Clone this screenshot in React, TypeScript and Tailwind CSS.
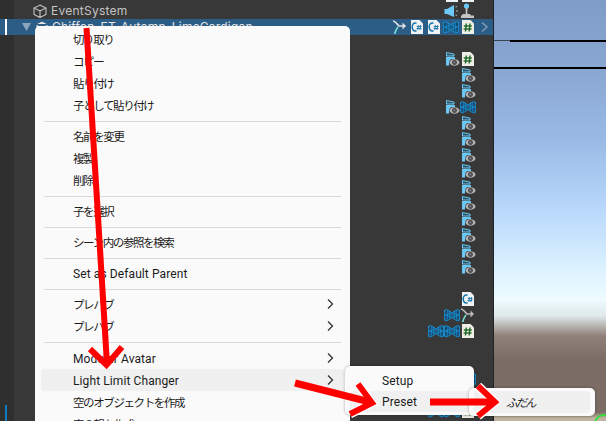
import React from 'react'

const menuFont = { fontFamily: 'Roboto, "Noto Sans CJK JP", sans-serif' }

function EyeFolder() {
  return (
    <svg width="16" height="16" viewBox="0 0 16 16">
      <path d="M2.500 1.500 L10 3.200 V5 H2.500 Z" fill="#33505f" stroke="#6cc9f7" strokeWidth="1" />
      <path d="M2 6 H11 V8 H8 C6 8.500 5 10 5 12 V14.500 H2 Z" fill="#6cc9f7" />
      <ellipse cx="10.500" cy="11.500" rx="5" ry="3.200" fill="#b0b0b0" />
      <circle cx="10.500" cy="11.500" r="2.400" fill="#444" />
      <circle cx="10.500" cy="11.500" r="1" fill="#8a8a8a" />
    </svg>
  )
}

function HashDoc() {
  return (
    <svg width="16" height="16" viewBox="0 0 16 16">
      <path d="M2 1 H10.500 L14 4.500 V15 H2 Z" fill="#eeeee6" />
      <path d="M6.300 4.500 L5.500 12.500 M10 4.500 L9.200 12.500 M3.800 7 H11.800 M3.600 10 H11.600" stroke="#256b2c" strokeWidth="1.500" fill="none" />
    </svg>
  )
}

function CsDoc() {
  return (
    <svg width="16" height="16" viewBox="0 0 16 16">
      <path d="M2 1 H10.500 L14 4.500 V15 H2 Z" fill="#eef2f4" />
      <path d="M7.500 4.200 C4 3.600 3.200 6 3.200 8 C3.200 10.500 4.600 12.600 7.500 11.800" stroke="#1474ac" strokeWidth="1.500" fill="none" />
      <path d="M9.400 6 L8.800 11 M11.600 6 L11 11 M7.800 7.500 H12.600 M7.600 9.500 H12.400" stroke="#1474ac" strokeWidth="0.900" fill="none" />
    </svg>
  )
}

function Bowtie() {
  return (
    <svg width="16" height="16" viewBox="0 0 16 16">
      <path d="M0.800 3 C3 2 6 4.500 8 6 C10 4.500 13 2 15.200 3 C16 6 16 10.500 15.200 13.500 C13 14.500 10 12 8 10.500 C6 12 3 14.500 0.800 13.500 C0 10.500 0 6 0.800 3 Z" fill="#174a6b" stroke="#1a96dc" strokeWidth="1" />
      <path d="M4 3 L3 13.500 M5.500 4 L6 12 M12 3 L13 13.500 M10.500 4 L10 12 M1 8 L7 6.500 M1 8 L7 10 M15 8 L9 6.500 M15 8 L9 10 M8 6 V10.500" stroke="#1a96dc" strokeWidth="0.700" fill="none" />
    </svg>
  )
}

function Fork({ light }: { light?: boolean }) {
  return (
    <svg width="16" height="16" viewBox="0 0 16 16">
      <path d="M1 2 C3 2 5 5 7 7 H12" stroke={light ? '#e0e0e0' : '#b9b9b9'} strokeWidth="1.600" fill="none" />
      <path d="M10.500 3.500 L14 7 L10.500 10.500 Z" fill={light ? '#e0e0e0' : '#b9b9b9'} />
      <path d="M6 8 C4 10 3.400 12 2.600 15" stroke="#7be3d6" strokeWidth="1.600" fill="none" />
    </svg>
  )
}

function Speaker() {
  return (
    <svg width="16" height="16" viewBox="0 0 16 16">
      <path d="M0.500 6 H3 L10 2 V14 L3 11 H0.500 Z" fill="#6cc9f7" />
      <path d="M11.500 4 L13 3.500 M12 8 H14 M11.500 12 L13 12.500" stroke="#9fb8c8" strokeWidth="1.200" />
    </svg>
  )
}

function Joystick() {
  return (
    <svg width="16" height="16" viewBox="0 0 16 16">
      <circle cx="6.500" cy="3" r="2.600" fill="#6cc9f7" />
      <rect x="5.700" y="5" width="1.700" height="6" fill="#c4c4c4" />
      <path d="M3 11 H10 L11 12.500 H14 V15 H1 V13 Z" fill="#c4c4c4" />
    </svg>
  )
}

// icons for each hierarchy row, left to right from the right edge
const rows: React.ReactNode[][] = [
  [<CsDoc key="a" />, <CsDoc key="b" />],
  [<Speaker key="a" />, <Joystick key="b" />],
  [<Fork key="a" light />, <CsDoc key="b" />, <CsDoc key="c" />, <Bowtie key="d" />, <HashDoc key="e" />],
  [],
  [<EyeFolder key="a" />, <HashDoc key="b" />],
  [<EyeFolder key="a" />],
  [<EyeFolder key="a" />],
  [<EyeFolder key="a" />, <Bowtie key="b" />],
  [<EyeFolder key="a" />],
  [<EyeFolder key="a" />],
  [<EyeFolder key="a" />],
  [<EyeFolder key="a" />],
  [<EyeFolder key="a" />],
  [<EyeFolder key="a" />],
  [<EyeFolder key="a" />],
  [<EyeFolder key="a" />],
  [<EyeFolder key="a" />],
  [<EyeFolder key="a" />],
  [],
  [<CsDoc key="a" />],
  [<Bowtie key="a" />, <Fork key="b" />],
  [<Bowtie key="a" />, <Bowtie key="b" />, <HashDoc key="c" />],
  [],
  [],
  [<Bowtie key="a" />],
  [],
  [<Bowtie key="a" />, <Bowtie key="b" />, <HashDoc key="c" />],
]

function Cube({ filled }: { filled?: boolean }) {
  return (
    <svg width="14" height="14" viewBox="0 0 14 14" className="shrink-0">
      <path d="M7 1 L13 4 V10.500 L7 13.500 L1 10.500 V4 Z M1 4 L7 7 L13 4 M7 7 V13.500" fill={filled ? '#e8e8e8' : 'none'} stroke={filled ? '#2c5d87' : '#c4c4c4'} strokeWidth="1.100" />
    </svg>
  )
}

function Separator({ tall }: { tall?: boolean }) {
  return <div className={tall ? 'mx-[9px] mt-[5px] mb-[4px] h-px bg-[#d9d9d9]' : 'mx-[9px] mt-[5px] mb-[3px] h-px bg-[#d9d9d9]'} />
}

function Chevron() {
  return (
    <svg width="8" height="12" viewBox="0 0 8 12" className="shrink-0">
      <path d="M2 1.500 L6.500 6 L2 10.500" fill="none" stroke="#333" strokeWidth="1.300" />
    </svg>
  )
}

function Item({ label, sub, active, ja }: { label: string; sub?: boolean; active?: boolean; ja?: boolean }) {
  return (
    <div className={active ? 'mx-[6px] flex h-[22px] items-center justify-between rounded-[4px] bg-[#f0f0f0] pl-[32px] pr-[10px]' : 'mx-[6px] flex h-[22px] items-center justify-between pl-[32px] pr-[10px]'}>
      <span className={ja ? 'whitespace-nowrap pt-[3px] text-[11.5px] tracking-[-1.4px] text-[#1b1b1b]' : 'whitespace-nowrap pt-px text-[12px] tracking-[0.1px] text-[#1b1b1b]'}>{label}</span>
      {sub && <Chevron />}
    </div>
  )
}

export default function App() {
  return (
    <div className="relative flex h-[421px] w-[606px] overflow-hidden bg-[#383838]">
      {/* hierarchy */}
      <div className="flex w-[493px] shrink-0">
        <div className="relative w-[14px] shrink-0 bg-[#2f2f2f]">
          <div className="absolute left-[5px] top-[405px] h-[16px] w-[2px] bg-[#1279bd]" />
        </div>
        <div className="-ml-[14px] -mt-[13px] flex w-full flex-col" style={{ fontFamily: 'Inter, sans-serif' }}>
          {rows.map((icons, i) => (
            <div key={i} className={i === 2 ? 'relative z-0 flex h-4 shrink-0 items-center bg-[#2c5d87] pr-[4px]' : 'relative z-0 flex h-4 shrink-0 items-center pr-[17px]'}>
              {i === 2 && <div className="absolute left-[5px] top-0 h-4 w-[2px] bg-white" />}
              {i === 1 && (
                <div className="ml-[33px] flex items-center gap-[4px] text-[12px] tracking-[0.25px] text-[#c4c4c4]">
                  <Cube />
                  <span>EventSystem</span>
                </div>
              )}
              {i === 2 && (
                <div className="ml-[22px] flex items-center gap-[3px] text-[12px] tracking-[0.2px] text-[#e4e4e4]">
                  <svg width="9" height="8" viewBox="0 0 9 8" className="mr-[1px]"><path d="M0 0 H9 L4.500 8 Z" fill="#8aa5bd" /></svg>
                  <Cube filled />
                  <span>Chiffon_FT_Autemn_LimeCardigan</span>
                </div>
              )}
              <div className={i === 2 ? 'ml-auto flex items-center gap-px' : 'ml-auto flex items-center'}>{icons}</div>
              {i === 2 && (
                <svg width="9" height="12" viewBox="0 0 9 12" className="ml-[4px]"><path d="M2 1.500 L7 6 L2 10.500" fill="none" stroke="#7f9db8" strokeWidth="1.500" /></svg>
              )}
            </div>
          ))}
        </div>
      </div>

      {/* scene view */}
      <div className="relative flex-1 border-l border-[#1f2226] bg-[linear-gradient(180deg,#7f9bc8_0px,#8aa6d3_70px,#9abae6_140px,#b9d8fb_210px,#dcf2ff_270px,#eefbff_300px,#e0e8ea_316px,#8f8078_336px,#7b6d66_360px,#7b6d66_412px,#c0b3a0_418px)]">
        <div className="absolute left-0 w-[16px] top-[40px] h-px bg-[#3a4252]" />
        <div className="absolute left-[16px] right-0 top-[40px] h-[2px] bg-black" />
        <div className="absolute left-0 right-0 top-[67px] h-[2px] bg-black" />
        <div className="absolute -right-[12px] top-[414px] h-[20px] w-[24px] rounded-full border-2 border-[#35e03a]" />
      </div>

      {/* context menu */}
      <div className="absolute left-[35px] top-[26px] w-[315px] rounded-t-[5px] bg-[#fafafa] pt-[2px] pb-[20px]" style={menuFont}>
        <Item ja label="切り取り" />
        <Item ja label="コピー" />
        <Item ja label="貼り付け" />
        <Item ja label="子として貼り付け" />
        <Separator />
        <Item ja label="名前を変更" />
        <Item ja label="複製" />
        <Item ja label="削除" />
        <Separator />
        <Item ja label="子を選択" />
        <Separator />
        <Item ja label="シーン内の参照を検索" />
        <Separator />
        <Item label="Set as Default Parent" />
        <Separator />
        <Item ja label="プレハブ" sub />
        <Item ja label="プレハブ" sub />
        <Separator tall />
        <Item label="Modular Avatar" sub />
        <Item label="Light Limit Changer" sub active />
        <Item ja label="空のオブジェクトを作成" />
        <Item ja label="空の親を作成" />
      </div>

      {/* submenu */}
      <div className="absolute left-[345px] top-[366px] w-[129px] rounded-[5px] bg-[#fafafa] py-[3px] shadow-[0_0_3px_rgba(0,0,0,0.35)]" style={menuFont}>
        <div className="flex h-[22px] items-center pl-[37px] pt-px text-[12px] tracking-[0.1px] text-[#1b1b1b]">Setup</div>
        <div className="mx-[5px] flex h-[21px] items-center rounded-[4px] bg-[#f0f0f0] pl-[32px] pt-px text-[12px] tracking-[0.1px] text-[#1b1b1b]">Preset</div>
      </div>

      {/* second submenu */}
      <div className="absolute left-[469px] top-[388px] w-[126px] rounded-[5px] bg-[#fafafa] py-[3px] shadow-[0_0_3px_rgba(0,0,0,0.35)]" style={menuFont}>
        <div className="mx-[5px] flex h-[22px] items-center rounded-[4px] bg-[#f0f0f0] pl-[32px] pt-[3px] text-[11.5px] italic tracking-[-2px] text-[#1b1b1b]">ふだん</div>
      </div>

      {/* annotation arrows */}
      <svg className="pointer-events-none absolute left-0 top-0" width="606" height="421" viewBox="0 0 606 421">
        <g fill="none" stroke="#ffffff" strokeWidth="9">
          <path d="M358 384 L372 403 L350 414" />
          <path d="M478 386 L495 402 L478 416" />
        </g>
        <g fill="none" stroke="#ff0000" strokeWidth="6">
          <path d="M86.500 28 L107 364" />
          <path d="M90 349 L106.500 365 L122 347" />
          <path d="M295 383 L370 402" strokeWidth="7" />
          <path d="M358 384 L372 403 L350 414" />
          <path d="M430 402 L492 402" strokeWidth="7" />
          <path d="M478 386 L495 402 L478 416" />
        </g>
      </svg>
    </div>
  )
}
